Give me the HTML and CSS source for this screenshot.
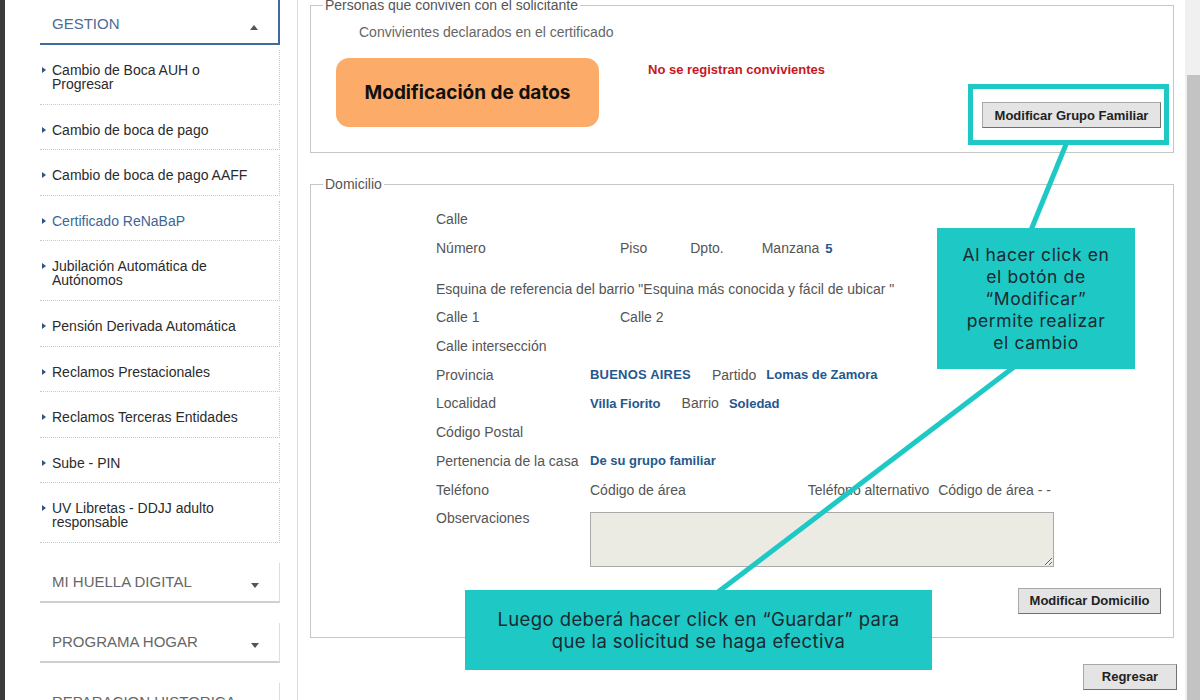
FILE: index.html
```html
<!DOCTYPE html>
<html lang="es">
<head>
  <meta charset="UTF-8">
  <meta name="viewport" content="width=device-width, initial-scale=1.0">
  <title>Certificado ReNaBaP</title>
  <link rel="stylesheet" href="styles.css">
</head>
<body>
  <div class="page">
    <div class="edge"></div>

    <aside class="sidebar">
      <div class="menu">
        <div class="menu-head open">GESTION <span class="caret up"></span></div>
        <ul class="menu-list">
          <li>Cambio de Boca AUH o Progresar</li>
          <li>Cambio de boca de pago</li>
          <li>Cambio de boca de pago AAFF</li>
          <li class="active">Certificado ReNaBaP</li>
          <li>Jubilación Automática de Autónomos</li>
          <li>Pensión Derivada Automática</li>
          <li>Reclamos Prestacionales</li>
          <li>Reclamos Terceras Entidades</li>
          <li>Sube - PIN</li>
          <li>UV Libretas - DDJJ adulto responsable</li>
        </ul>
        <div class="menu-head">MI HUELLA DIGITAL <span class="caret"></span></div>
        <div class="menu-head">PROGRAMA HOGAR <span class="caret"></span></div>
        <div class="menu-head">REPARACION HISTORICA <span class="caret"></span></div>
      </div>
    </aside>

    <main class="content">
      <fieldset class="box first">
        <legend>Personas que conviven con el solicitante</legend>
        <p class="hint">Convivientes declarados en el certificado</p>
        <div class="conv-row">
          <div class="tag-orange">Modificación de datos</div>
          <span class="empty-msg">No se registran convivientes</span>
          <button class="btn btn-family">Modificar Grupo Familiar</button>
        </div>
      </fieldset>

      <fieldset class="box addr">
        <legend>Domicilio</legend>
        <div class="rows">
          <div class="row"><span class="lbl">Calle</span></div>
          <div class="row">
            <span class="lbl">Número</span>
            <span class="sub piso">Piso</span>
            <span class="sub dpto">Dpto.</span>
            <span class="sub manzana">Manzana</span>
            <b class="val tight">5</b>
          </div>
          <div class="row spaced"><span>Esquina de referencia del barrio "Esquina más conocida y fácil de ubicar "</span></div>
          <div class="row">
            <span class="lbl">Calle 1</span>
            <span class="sub piso">Calle 2</span>
          </div>
          <div class="row"><span class="lbl">Calle intersección</span></div>
          <div class="row">
            <span class="lbl">Provincia</span>
            <b class="val caps">BUENOS AIRES</b>
            <span class="sub">Partido</span>
            <b class="val">Lomas de Zamora</b>
          </div>
          <div class="row">
            <span class="lbl">Localidad</span>
            <b class="val">Villa Fiorito</b>
            <span class="sub">Barrio</span>
            <b class="val">Soledad</b>
          </div>
          <div class="row"><span class="lbl">Código Postal</span></div>
          <div class="row">
            <span class="lbl">Pertenencia de la casa</span>
            <b class="val">De su grupo familiar</b>
          </div>
          <div class="row">
            <span class="lbl">Teléfono</span>
            <span>Código de área</span>
            <span class="alt-phone">Teléfono alternativo</span>
            <span class="alt-code">Código de área - -</span>
          </div>
          <div class="row obs">
            <span class="lbl">Observaciones</span>
            <textarea class="obs-box" readonly></textarea>
          </div>
        </div>
        <div class="actions">
          <button class="btn btn-addr">Modificar Domicilio</button>
        </div>
      </fieldset>

      <div class="actions back">
        <button class="btn btn-back">Regresar</button>
      </div>
    </main>

    <div class="scrollbar"><div class="thumb"></div></div>

    <!-- tutorial annotations drawn over the page -->
    <div class="note-frame"></div>
    <svg class="note-lines" width="1200" height="700" viewBox="0 0 1200 700">
      <line x1="1067" y1="142" x2="1031" y2="230" />
      <line x1="1014" y1="367" x2="718" y2="592" />
    </svg>
    <div class="note note-a">Al hacer click en<br>el botón de<br>“Modificar”<br>permite realizar<br>el cambio</div>
    <div class="note note-b">Luego deberá hacer click en “Guardar” para<br>que la solicitud se haga efectiva</div>
  </div>
</body>
</html>
```

FILE: styles.css
```css
body {
  margin: 0;
  font-family: "Liberation Sans", Arial, sans-serif;
  font-size: 14px;
  color: #555;
  background: #fff;
  overflow: hidden;
}
.page {
  position: relative;
  display: flex;
  height: 700px;
  overflow: hidden;
}
.edge {
  flex: none;
  width: 5px;
  background: #3b3b3b;
}

/* sidebar */
.sidebar {
  flex: none;
  width: 293px;
  box-sizing: border-box;
  padding-left: 35px;
  border-right: 1px solid #dcdcdc;
}
.menu {
  width: 240px;
}
.menu-head {
  display: flex;
  align-items: center;
  justify-content: space-between;
  height: 38px;
  margin-top: 20px;
  padding: 0 20px 0 12px;
  font-size: 15px;
  color: #666;
  border-right: 1px solid #ddd;
  border-bottom: 2px solid #cfcfcf;
}
.menu-head.open {
  height: 39px;
  margin-top: 0;
  padding-top: 4px;
  color: #4a6d96;
  border-right: 2px solid #3d6a9f;
  border-bottom: 2px solid #3d6a9f;
}
.caret {
  width: 0;
  height: 0;
  margin-top: 8px;
  border-left: 4px solid transparent;
  border-right: 4px solid transparent;
  border-top: 5px solid #555;
}
.caret.up {
  border-top: 0;
  border-bottom: 5px solid #555;
}
.menu-list {
  list-style: none;
  margin: 0;
  padding: 0;
}
.menu-list li {
  display: flex;
  gap: 6px;
  margin-top: 5px;
  padding: 13px 20px 12.6px 2px;
  line-height: 14px;
  color: #2b2b2b;
  border-right: 1px dotted #c8c8c8;
  border-bottom: 1px dotted #c8c8c8;
}
.menu-list li::before {
  content: "";
  flex: none;
  align-self: flex-start;
  width: 0;
  height: 0;
  margin-top: 4px;
  border-left: 4px solid #2f5683;
  border-top: 3px solid transparent;
  border-bottom: 3px solid transparent;
}
.menu-list li.active {
  color: #3c6795;
}

/* main */
.content {
  flex: 1;
  min-width: 0;
  padding: 0 11px 0 12px;
}
.box {
  margin: 0;
  padding: 0;
  min-width: 0;
  border: 1px solid #c6c6c6;
}
.box legend {
  margin-left: 12px;
  padding: 0 2px;
  line-height: 16px;
  font-size: 14px;
  color: #555;
}
.box.first {
  margin-top: -3px;
}
.hint {
  margin: 10px 0 0 48px;
  line-height: 18px;
  color: #666;
}
.conv-row {
  display: flex;
  align-items: flex-start;
  margin-top: 17px;
  padding: 0 12px 24px 25px;
}
.tag-orange {
  display: flex;
  align-items: center;
  justify-content: center;
  width: 263px;
  height: 69px;
  border-radius: 13px;
  background: #fdab68;
  color: #111;
  font-family: Inter, "Open Sans", sans-serif;
  font-weight: 700;
  font-size: 19px;
}
.empty-msg {
  margin: 4px 0 0 49px;
  font-weight: bold;
  font-size: 13px;
  color: #c8161d;
}
.btn {
  height: 26px;
  padding: 0;
  font-family: "Liberation Sans", Arial, sans-serif;
  font-weight: bold;
  font-size: 13px;
  color: #222;
  background: #e4e4e4;
  border: 1px solid;
  border-color: #a8a8a8 #707070 #707070 #a8a8a8;
}
.btn-family {
  width: 179px;
  margin: 44px 0 0 auto;
}
.btn-addr {
  width: 143px;
}
.btn-back {
  width: 94px;
}

.addr {
  margin-top: 23px;
}
.rows {
  padding: 13px 0 0 125px;
}
.row {
  display: flex;
  align-items: center;
  height: 28.7px;
  white-space: nowrap;
}
.row.spaced {
  margin-top: 12px;
}
.lbl {
  flex: none;
  width: 154px;
}
.sub.piso {
  margin-left: 30px;
}
.sub.dpto {
  margin-left: 43px;
}
.sub.manzana {
  margin-left: 38px;
}
.val {
  font-size: 13px;
  color: #24588e;
}
.val.caps {
  letter-spacing: 0.2px;
}
.val + .sub {
  margin-left: 21px;
}
.sub + .val {
  margin-left: 10px;
}
.sub + .val.tight {
  margin-left: 6px;
}
.alt-phone {
  margin-left: 122px;
}
.alt-code {
  margin-left: 9px;
}
.row.obs {
  align-items: flex-start;
  height: auto;
  line-height: 29px;
}
.obs-box {
  width: 464px;
  height: 55px;
  margin-top: 8px;
  box-sizing: border-box;
  background: #ebebe4;
  border: 1px solid #a9a9a9;
  border-radius: 0;
}
.actions {
  display: flex;
  justify-content: flex-end;
  margin-top: 21px;
  padding: 0 12px 23px 0;
}
.actions.back {
  margin: 26px -3px 0 0;
  padding: 0;
}

/* fake scrollbar */
.scrollbar {
  flex: none;
  display: flex;
  flex-direction: column;
  width: 15px;
  background: #f0f0f0;
}
.thumb {
  flex: 1;
  margin: 75px 0 0 2px;
  background: #c3c3c3;
}

/* annotations */
.note-frame {
  position: absolute;
  left: 968px;
  top: 84px;
  width: 201px;
  height: 61px;
  box-sizing: border-box;
  border: 5px solid #1ec8c5;
}
.note-lines {
  position: absolute;
  left: 0;
  top: 0;
  pointer-events: none;
}
.note-lines line {
  stroke: #1ec8c5;
  stroke-width: 5;
}
.note {
  position: absolute;
  display: flex;
  align-items: center;
  justify-content: center;
  box-sizing: border-box;
  background: #1ec8c5;
  color: #1b2a31;
  font-family: Inter, "Open Sans", sans-serif;
  line-height: 22px;
  text-align: center;
}
.note-a {
  left: 937px;
  top: 228px;
  width: 198px;
  height: 141px;
  font-size: 17.5px;
  letter-spacing: 0.6px;
}
.note-b {
  left: 465px;
  top: 590px;
  width: 467px;
  height: 80px;
  font-size: 18.5px;
  letter-spacing: 0.4px;
}
```
